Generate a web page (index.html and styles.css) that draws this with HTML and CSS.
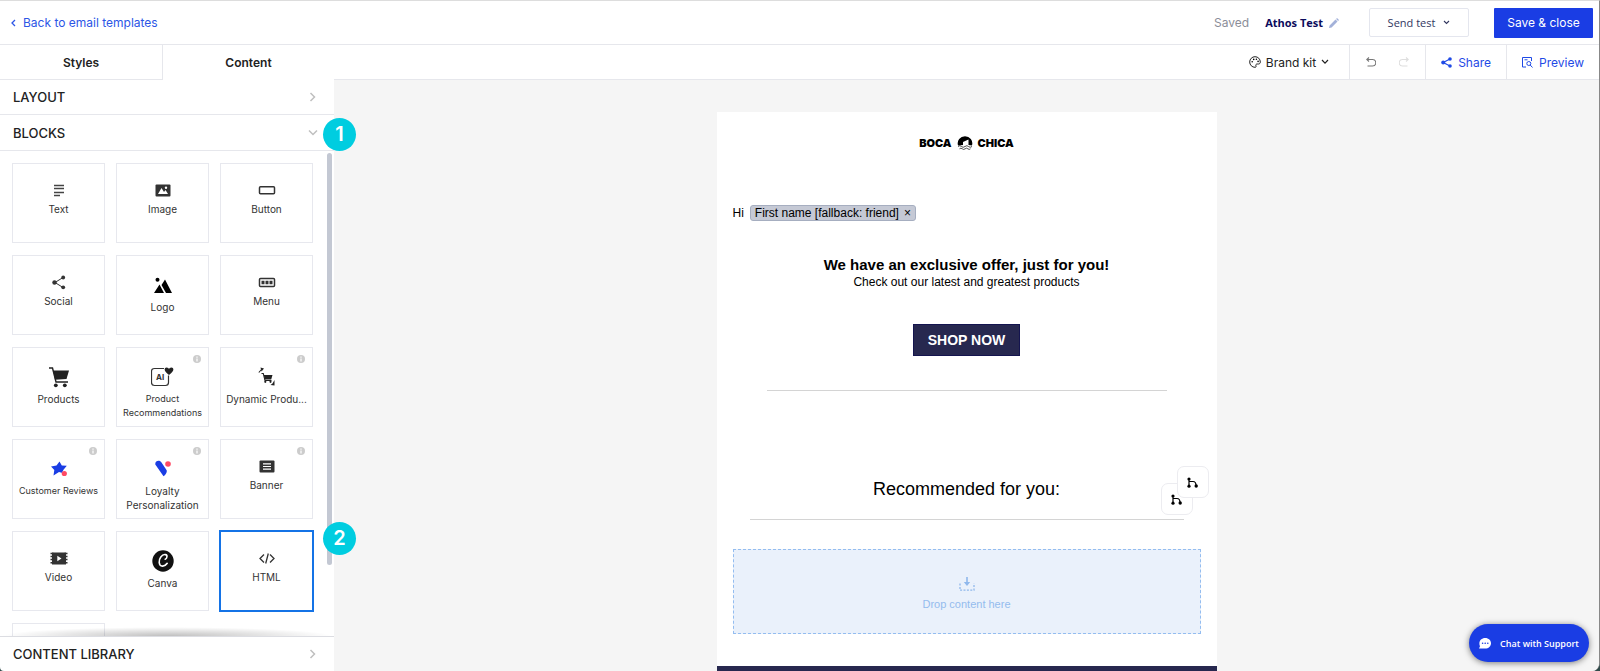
FILE: index.html
```html
<!DOCTYPE html>
<html lang="en">
<head>
  <meta charset="UTF-8">
  <meta name="viewport" content="width=device-width, initial-scale=1.0">
  <title>Email Editor</title>
  <link rel="stylesheet" href="styles.css">
</head>
<body>
  <div class="app">
    <!-- Top bar -->
    <header class="top-bar">
      <a class="back-link" href="#">
        <svg width="5" height="8" viewBox="0 0 5 8"><path d="M4 1 1 4l3 3" fill="none" stroke="currentColor" stroke-width="1.3"/></svg>
        Back to email templates
      </a>
      <div class="top-actions">
        <span class="saved">Saved</span>
        <button class="template-name">Athos Test
          <svg width="10" height="10" viewBox="0 0 10 10"><path d="M0 10 .6 7.400 6.500 1.500 8.500 3.500 2.600 9.400zM7.100.9 8 0 10 2 9.100 2.900z" fill="#a3b1d9"/></svg>
        </button>
        <button class="send-test">Send test
          <svg width="7" height="5" viewBox="0 0 7 5"><path d="m1 1 2.500 2.500L6 1" fill="none" stroke="currentColor" stroke-width="1.100"/></svg>
        </button>
        <button class="save-close">Save &amp; close</button>
      </div>
    </header>

    <!-- Toolbar -->
    <div class="toolbar">
      <div class="tabs">
        <button class="tab tab-styles">Styles</button>
        <button class="tab tab-content">Content</button>
      </div>
      <div class="tools">
        <button class="tool brand-kit">
          <svg width="12" height="12" viewBox="0 0 12 12"><path d="M6 .7a5.300 5.300 0 1 0 0 10.600c1 0 1.300-.6 1-1.300-.5-1.200 0-2 1.200-2h1.300c1 0 1.800-.7 1.800-2C11.300 3 9 .7 6 .7z" fill="none" stroke="currentColor"/><circle cx="3.200" cy="5.800" r=".8"/><circle cx="4.700" cy="3.400" r=".8"/><circle cx="7.400" cy="3.300" r=".8"/><circle cx="9.100" cy="5.400" r=".8"/></svg>
          Brand kit
          <svg width="8" height="6" viewBox="0 0 8 6"><path d="m1 1 3 3.200L7 1" fill="none" stroke="currentColor" stroke-width="1.200"/></svg>
        </button>
        <div class="tool history">
          <button class="history-btn" aria-label="Undo">
            <svg width="10" height="10" viewBox="0 0 10 10"><path d="M3 .5.8 2.500 3 4.500M1 2.500h5.500a3 3 0 0 1 0 6.500H1.500" fill="none" stroke="#777" stroke-width="1.100"/></svg>
          </button>
          <button class="history-btn" aria-label="Redo">
            <svg width="10" height="10" viewBox="0 0 10 10"><path d="m7 .5 2.200 2L7 4.500M9 2.500H3.500a3 3 0 0 0 0 6.500h5" fill="none" stroke="#dedede" stroke-width="1.100"/></svg>
          </button>
        </div>
        <button class="tool tool-link">
          <svg width="11" height="11" viewBox="0 0 11 11"><path d="M9 2 2.200 5.500 9 9" fill="none" stroke="currentColor" stroke-width="1.200"/><g fill="currentColor"><circle cx="9" cy="2" r="1.800"/><circle cx="2.200" cy="5.500" r="2"/><circle cx="9" cy="9" r="1.800"/></g></svg>
          Share
        </button>
        <button class="tool tool-link">
          <svg width="11" height="11" viewBox="0 0 11 11"><g fill="none" stroke="currentColor"><path d="M4 10H.5V.5h9V4M2.500 2.800h3"/><circle cx="6.800" cy="6.500" r="2"/><path d="m8.200 8 2.300 2.500"/></g></svg>
          Preview
        </button>
      </div>
    </div>

    <div class="workspace">
      <!-- Sidebar -->
      <aside class="sidebar">
        <button class="section">LAYOUT
          <svg width="7" height="10" viewBox="0 0 7 10"><path d="m1.500 1 4 4-4 4" fill="none" stroke="#bfbfbf" stroke-width="1.500"/></svg>
        </button>
        <button class="section section-open">BLOCKS
          <svg width="10" height="7" viewBox="0 0 10 7"><path d="m1 1.500 4 4 4-4" fill="none" stroke="#bfbfbf" stroke-width="1.500"/></svg>
        </button>

        <div class="blocks">
          <div class="block-grid">
            <button class="block">
              <svg class="icon" width="12" height="16" viewBox="0 0 12 16"><path d="M1 3.500h10M1 6.500h10M1 10.500h10M1 13.500h6" stroke="#444" stroke-width="1.300"/></svg>
              <span class="label">Text</span>
            </button>
            <button class="block">
              <svg class="icon" width="16" height="16" viewBox="0 0 16 16"><rect x=".5" y="2.500" width="15" height="12" rx="1" fill="#333"/><path d="m3 12 3.500-6 2.500 4 1.500-2L13 12z" fill="#fff"/><circle cx="11" cy="5.800" r="1.200" fill="#fff"/></svg>
              <span class="label">Image</span>
            </button>
            <button class="block">
              <svg class="icon" width="18" height="16" viewBox="0 0 18 16"><rect x="1.500" y="4.800" width="15" height="7" rx="1" fill="none" stroke="#333" stroke-width="1.500"/></svg>
              <span class="label">Button</span>
            </button>

            <button class="block">
              <svg class="icon" width="14" height="16" viewBox="0 0 14 16"><path d="M11 3.500 3 8.500l8 5" fill="none" stroke="#333"/><g fill="#333"><circle cx="11.200" cy="3.500" r="1.900"/><circle cx="2.500" cy="8.500" r="2.200"/><circle cx="11.200" cy="13.300" r="1.900"/></g></svg>
              <span class="label">Social</span>
            </button>
            <button class="block">
              <svg class="icon icon-large" width="18" height="22" viewBox="0 0 18 22"><circle cx="3.500" cy="5.800" r="2"/><path d="m0 19 5.500-8.500L10 19zM7.500 11 11 5.500 18 19h-6z"/></svg>
              <span class="label">Logo</span>
            </button>
            <button class="block">
              <svg class="icon" width="18" height="16" viewBox="0 0 18 16"><rect x="1.500" y="4.500" width="15" height="8" rx="1" fill="none" stroke="#333" stroke-width="1.500"/><path d="M3.500 6.800h3v3.500h-3zM7.500 6.800h3v3.500h-3zM11.500 6.800h3v3.500h-3z" fill="#333"/></svg>
              <span class="label">Menu</span>
            </button>

            <button class="block">
              <svg class="icon icon-large" width="20" height="22" viewBox="0 0 20 22"><g fill="#222"><path d="M4.200 4.500H20L17.500 13 6 13.800z"/><circle cx="6.800" cy="19.300" r="1.900"/><circle cx="15.800" cy="19.300" r="1.900"/></g><path d="M0 2h3.500L7 16h12" fill="none" stroke="#222" stroke-width="1.400"/></svg>
              <span class="label">Products</span>
            </button>
            <button class="block">
              <svg class="info" width="8" height="8" viewBox="0 0 8 8"><circle cx="4" cy="4" r="4" fill="#ccc"/><path d="M4 1.500v1.200M4 3.400v3" stroke="#fff" stroke-width="1.200"/></svg>
              <svg class="icon icon-large" width="23" height="22" viewBox="0 0 23 22"><path d="M13 2.500H3.500q-3 0-3 3v11q0 3 3 3h11q3 0 3-3V9.500" fill="none" stroke="#333" stroke-width="1.200"/><path d="M18 9c-6-4-4.800-7.600-2.500-7.600 1.500 0 2.500 1 2.500 1.800 0-.8 1-1.800 2.500-1.800C22.800 1.400 24 5 18 9z" fill="#222"/><text x="5" y="14" class="ai-text">AI</text></svg>
              <span class="label label-small">Product Recommendations</span>
            </button>
            <button class="block">
              <svg class="info" width="8" height="8" viewBox="0 0 8 8"><circle cx="4" cy="4" r="4" fill="#ccc"/><path d="M4 1.500v1.200M4 3.400v3" stroke="#fff" stroke-width="1.200"/></svg>
              <svg class="icon icon-large" width="18" height="22" viewBox="0 0 18 22"><g fill="#222"><path d="M5.800 9h8.700l-1.300 4.500H6.800zM2.500 1.500l3.500 1-2.500 3zM16.500 14v5.500l-4-.5 2-1.500z"/><circle cx="7.300" cy="15.800" r="1.100"/><circle cx="12.500" cy="15.800" r="1.100"/></g><path d="M.8 6.500 3.500 3.500M3.500 7.500h1.800L7 14.500h6.500" fill="none" stroke="#222" stroke-width="1.100"/></svg>
              <span class="label">Dynamic Produ...</span>
            </button>

            <button class="block">
              <svg class="info" width="8" height="8" viewBox="0 0 8 8"><circle cx="4" cy="4" r="4" fill="#ccc"/><path d="M4 1.500v1.200M4 3.400v3" stroke="#fff" stroke-width="1.200"/></svg>
              <svg class="icon icon-large" width="16" height="22" viewBox="0 0 16 22"><path d="M8.500 3.500 10.800 7.500l5 .3-3.300 4-1.500 3-3-.8L2.500 17.500 3.300 12 0 8.500l5.500-1z" fill="#1a3de4"/><circle cx="13.300" cy="15.500" r="2.600" fill="#ff4a64"/></svg>
              <span class="label label-small">Customer Reviews</span>
            </button>
            <button class="block">
              <svg class="info" width="8" height="8" viewBox="0 0 8 8"><circle cx="4" cy="4" r="4" fill="#ccc"/><path d="M4 1.500v1.200M4 3.400v3" stroke="#fff" stroke-width="1.200"/></svg>
              <svg class="icon icon-large" width="16" height="22" viewBox="0 0 16 22"><path d="M.3 6.500C-.2 2.500 4.800 1.500 6.500 4.500l5 7.500c1.200 2-1.500 5.500-3 6.300z" fill="#1a3de4"/><circle cx="13" cy="6" r="2.800" fill="#ff4a64"/></svg>
              <span class="label">Loyalty Personalization</span>
            </button>
            <button class="block">
              <svg class="info" width="8" height="8" viewBox="0 0 8 8"><circle cx="4" cy="4" r="4" fill="#ccc"/><path d="M4 1.500v1.200M4 3.400v3" stroke="#fff" stroke-width="1.200"/></svg>
              <svg class="icon" width="16" height="16" viewBox="0 0 16 16"><rect x=".5" y="2.500" width="15" height="12" rx="1" fill="#333"/><path d="M4 5.800h8M4 8.500h8M4 11.200h8" stroke="#fff" stroke-width="1.200"/></svg>
              <span class="label">Banner</span>
            </button>

            <button class="block">
              <svg class="icon" width="18" height="16" viewBox="0 0 18 16"><rect x="2" y="2.500" width="14" height="12" fill="#333"/><path d="M.5 3.500h3M.5 6.500h3M.5 9.500h3M.5 12.800h3M14.500 3.500h3M14.500 6.500h3M14.500 9.500h3M14.500 12.800h3" stroke="#333" stroke-width="1.600"/><path d="m7.300 5.800 4.200 2.700-4.200 2.700z" fill="#fff"/></svg>
              <span class="label">Video</span>
            </button>
            <button class="block">
              <svg class="icon icon-large" width="22" height="22" viewBox="0 0 22 22"><circle cx="11" cy="11" r="10.700" fill="#111"/><path d="M13.200 9.200c2-.8 2.600-4.200.3-4.600C9.800 4 6.800 8.800 7.200 12.500c.4 4.800 5.600 4.500 8 .8" fill="none" stroke="#fff" stroke-width="1.600" stroke-linecap="round"/></svg>
              <span class="label">Canva</span>
            </button>
            <button class="block block-selected">
              <svg class="icon" width="16" height="16" viewBox="0 0 16 16"><path d="M5 4.500 1 8.500l4 4M11 4.500l4 4-4 4M9.300 3.500l-2.600 10" fill="none" stroke="#333" stroke-width="1.300"/></svg>
              <span class="label">HTML</span>
            </button>

            <div class="block"></div>
          </div>
          <div class="scroll-thumb"></div>
          <div class="scroll-shadow"></div>
        </div>

        <button class="section section-bottom">CONTENT LIBRARY
          <svg width="7" height="10" viewBox="0 0 7 10"><path d="m1.500 1 4 4-4 4" fill="none" stroke="#bfbfbf" stroke-width="1.500"/></svg>
        </button>

        <span class="step step-1">1</span>
        <span class="step step-2">2</span>
      </aside>

      <!-- Canvas -->
      <main class="canvas">
        <div class="email">
          <div class="brand">
            <span>BOCA</span>
            <svg width="16" height="14" viewBox="0 0 16 14"><path d="M1 9.500A7.300 7.300 0 1 1 15 9.500l-3.500-.5V3.500L6 6v3z"/><path d="M6 7.500 11 5M6 9l5-2.500" stroke="#fff" stroke-width=".7"/><path d="M1 10.500q2-1.600 3.500 0t3.500 0 3.500 0 3.500 0M2.500 12.800q1.500-1.300 2.800 0t2.800 0 2.800 0 2.600 0" fill="none" stroke="#222" stroke-width=".8"/></svg>
            <span>CHICA</span>
          </div>
          <p class="greeting">Hi <span class="token">First name [fallback: friend] <button class="token-remove" aria-label="Remove">×</button></span></p>
          <h1 class="offer">We have an exclusive offer, just for you!</h1>
          <p class="offer-sub">Check out our latest and greatest products</p>
          <a class="shop-now" href="#">SHOP NOW</a>
          <hr class="rule rule-short">
          <div class="recommended">
            <h2 class="recommended-title">Recommended for you:</h2>
            <button class="branch branch-back" aria-label="Display condition">
              <svg width="11" height="11" viewBox="0 0 11 11"><path d="M2 1.500v8M2 4.500h4q3 0 3 4" fill="none" stroke="#000" stroke-width="1.200"/><circle cx="2" cy="2" r="1.600"/><circle cx="2" cy="9.200" r="1.600"/><circle cx="9.200" cy="9" r="1.700"/></svg>
            </button>
            <button class="branch branch-front" aria-label="Display condition">
              <svg width="11" height="11" viewBox="0 0 11 11"><path d="M2 1.500v8M2 4.500h4q3 0 3 4" fill="none" stroke="#000" stroke-width="1.200"/><circle cx="2" cy="2" r="1.600"/><circle cx="2" cy="9.200" r="1.600"/><circle cx="9.200" cy="9" r="1.700"/></svg>
            </button>
          </div>
          <hr class="rule rule-long">
          <div class="drop-zone">
            <svg width="16" height="14" viewBox="0 0 16 14"><path d="M8 0v6" stroke="#8fb8ec" stroke-width="1.600"/><path d="M4.800 5h6.400L8 9z" fill="#8fb8ec"/><path d="M1 6.500v6.700h14V6.500" fill="none" stroke="#8fb8ec" stroke-width="1.300" stroke-dasharray="2 1.400"/></svg>
            <span>Drop content here</span>
          </div>
          <div class="email-footer"></div>
        </div>
      </main>
    </div>

    <button class="chat">
      <svg width="12" height="11" viewBox="0 0 12 11"><path d="M6.200 0C9.600 0 12 2.300 12 5.300S9.600 10.600 6.200 10.600H0l1-2.400A5 5 0 0 1 .4 5.300C.4 2.300 2.800 0 6.200 0z" fill="#fff"/><g fill="#1a3de4"><circle cx="3.600" cy="5.200" r=".8"/><circle cx="6.200" cy="5.200" r=".8"/><circle cx="8.800" cy="5.200" r=".8"/></g></svg>
      Chat with Support
    </button>
  </div>
</body>
</html>
```
FILE: styles.css
```css
* {
  margin: 0;
  padding: 0;
  box-sizing: border-box;
}

body {
  background-color: #2f4a4a;
  font-family: Inter, "Liberation Sans", sans-serif;
  color: #222;
}

button {
  border: none;
  background: none;
  font: inherit;
  color: inherit;
  cursor: pointer;
}

a {
  text-decoration: none;
}

svg {
  flex-shrink: 0;
}

.app {
  position: relative;
  display: flex;
  flex-direction: column;
  height: 100vh;
  background-color: #fff;
  border-top: 1px solid #ddd;
  border-right: 1px solid #888;
  border-radius: 0 0 8px 4px;
  overflow: hidden;
}

/* Top bar */
.top-bar {
  display: flex;
  justify-content: space-between;
  align-items: center;
  height: 44px;
  padding: 0 6px 0 11px;
  border-bottom: 1px solid #e6e7ec;
}

.back-link {
  display: flex;
  align-items: center;
  gap: 7px;
  color: #2c56e6;
  font-size: 12px;
}

.top-actions {
  display: flex;
  align-items: center;
}

.saved {
  color: #8b8e99;
  font-size: 12px;
}

.template-name {
  display: flex;
  align-items: center;
  gap: 6px;
  margin: 0 30px 0 16px;
  font: bold 11px "Open Sans", sans-serif;
  color: #0b0b5c;
}

.send-test {
  display: flex;
  align-items: center;
  justify-content: center;
  gap: 8px;
  width: 100px;
  height: 29px;
  margin-right: 25px;
  border: 1px solid #e4e6ee;
  border-radius: 2px;
  font: 11px "Open Sans", sans-serif;
  color: #32375f;
}

.save-close {
  width: 99px;
  height: 30px;
  background-color: #1a3de4;
  border-radius: 1px;
  color: #fff;
  font-size: 12px;
}

/* Toolbar */
.toolbar {
  display: flex;
  height: 35px;
}

.tabs {
  display: flex;
  width: 334px;
}

.tab {
  font-size: 12px;
  font-weight: 600;
}

.tab-styles {
  width: 163px;
  border-right: 1px solid #e6e7ec;
  border-bottom: 1px solid #e6e7ec;
}

.tab-content {
  flex: 1;
}

.tools {
  display: flex;
  flex: 1;
  justify-content: flex-end;
  border-bottom: 1px solid #e6e7ec;
}

.tool {
  display: flex;
  align-items: center;
  gap: 6px;
  padding: 0 16px;
  font-size: 12px;
}

.tool + .tool {
  border-left: 1px solid #e6e7ec;
}

.brand-kit {
  padding: 0 20px;
  gap: 5px;
}

.history {
  gap: 23px;
}

.history-btn {
  display: flex;
}

.tool-link {
  padding: 0 15px;
  color: #1f4ae6;
}

/* Sidebar */
.workspace {
  display: flex;
  flex: 1;
  min-height: 0;
}

.sidebar {
  position: relative;
  display: flex;
  flex-direction: column;
  width: 334px;
}

.section {
  display: flex;
  justify-content: space-between;
  align-items: center;
  height: 35px;
  flex-shrink: 0;
  padding: 0 18px 0 13px;
  border-bottom: 1px solid #e6e7ec;
  font-size: 13px;
  font-weight: 500;
}

.section-open {
  height: 36px;
  padding-right: 16px;
}

.section-bottom {
  border-top: 1px solid #dcdde2;
  border-bottom: none;
}

.blocks {
  position: relative;
  flex: 1;
  min-height: 0;
  overflow: hidden;
}

.block-grid {
  display: grid;
  grid-template-columns: repeat(3, 1fr);
  grid-auto-rows: 80px;
  gap: 12px 11px;
  padding: 12px 21px 12px 12px;
}

.block {
  position: relative;
  display: flex;
  flex-direction: column;
  align-items: center;
  gap: 4px;
  min-width: 0;
  padding: 18px 3px 0;
  border: 1px solid #e7e8ee;
}

.block-selected {
  border-color: #1473e6;
  outline: 1px solid #1473e6;
}

.label {
  max-width: 100%;
  font-size: 10px;
  line-height: 14px;
  color: #333;
}

.label-small {
  font-size: 9px;
}

.info {
  position: absolute;
  top: 7px;
  right: 7px;
}

.ai-text {
  font: bold 8px Inter, sans-serif;
  fill: #333;
}

.scroll-thumb {
  position: absolute;
  top: 2px;
  right: 2px;
  width: 5px;
  height: 85%;
  border-radius: 3px;
  background-color: #c3c8d3;
}

.scroll-shadow {
  position: absolute;
  left: 0;
  right: 0;
  bottom: 0;
  height: 9px;
  background: radial-gradient(ellipse at bottom, rgba(0, 0, 0, 0.25), transparent 70%);
}

/* Numbered steps */
.step {
  position: absolute;
  right: -22px;
  width: 33px;
  height: 33px;
  border-radius: 50%;
  background-color: #00cde0;
  color: #fff;
  font-size: 20px;
  font-weight: 600;
  line-height: 33px;
  text-align: center;
}

.step-1 {
  top: 38px;
}

.step-2 {
  top: 442px;
}

/* Canvas */
.canvas {
  flex: 1;
  display: flex;
  justify-content: center;
  align-items: flex-start;
  padding-top: 32px;
  background-color: #f5f5f5;
  overflow: hidden;
}

.email {
  display: flex;
  flex-direction: column;
  width: 500px;
  padding-top: 23px;
  background-color: #fff;
  font-family: "Liberation Sans", Arial, sans-serif;
  color: #000;
}

.brand {
  display: flex;
  justify-content: center;
  align-items: center;
  gap: 5px;
  height: 16px;
  font: 900 11px Inter, sans-serif;
}

.greeting {
  display: flex;
  align-items: center;
  gap: 6px;
  margin: 54px 16px 0;
  font-size: 12px;
  line-height: 14px;
}

.token {
  display: flex;
  align-items: center;
  gap: 5px;
  padding: 0 4px;
  border: 1px solid #a6aec0;
  border-radius: 3px;
  background-color: #c5c9d5;
}

.token-remove {
  font-size: 12px;
  line-height: 14px;
}

.offer {
  margin-top: 35px;
  font-size: 15px;
  line-height: 18px;
  text-align: center;
}

.offer-sub {
  font-size: 12px;
  line-height: 16px;
  text-align: center;
}

.shop-now {
  align-self: center;
  margin-top: 34px;
  padding: 0 14px;
  border: 1px solid #14144f;
  background-color: #27284f;
  color: #fff;
  font-size: 14px;
  font-weight: bold;
  line-height: 30px;
}

.rule {
  border: none;
  border-top: 1px solid #d4d4d4;
}

.rule-short {
  margin: 34px 50px 0;
}

.recommended {
  position: relative;
  margin-top: 86px;
}

.recommended-title {
  font-size: 18px;
  font-weight: normal;
  line-height: 24px;
  text-align: center;
}

.branch {
  position: absolute;
  display: flex;
  align-items: center;
  justify-content: center;
  width: 32px;
  height: 32px;
  border: 1px solid #ececf0;
  border-radius: 7px;
  background-color: #fff;
}

.branch-back {
  right: 24px;
  top: 6px;
}

.branch-front {
  right: 8px;
  top: -11px;
}

.rule-long {
  margin: 18px 33px 0;
}

.drop-zone {
  display: flex;
  flex-direction: column;
  align-items: center;
  justify-content: center;
  gap: 6px;
  height: 85px;
  margin: 29px 16px 32px;
  padding-top: 4px;
  border: 1px dashed #94bdf0;
  background-color: #eaf1fb;
  color: #94bcee;
  font-size: 11px;
  line-height: 14px;
}

.email-footer {
  height: 40px;
  background-color: #27284f;
}

/* Support chat */
.chat {
  position: absolute;
  right: 10px;
  bottom: 9px;
  display: flex;
  align-items: center;
  justify-content: center;
  gap: 9px;
  width: 120px;
  height: 38px;
  border-radius: 19px;
  background-color: #1a3de4;
  box-shadow: 0 1px 6px rgba(0, 0, 0, 0.5);
  color: #fff;
  font: 600 9px "Open Sans", sans-serif;
  white-space: nowrap;
}
```
